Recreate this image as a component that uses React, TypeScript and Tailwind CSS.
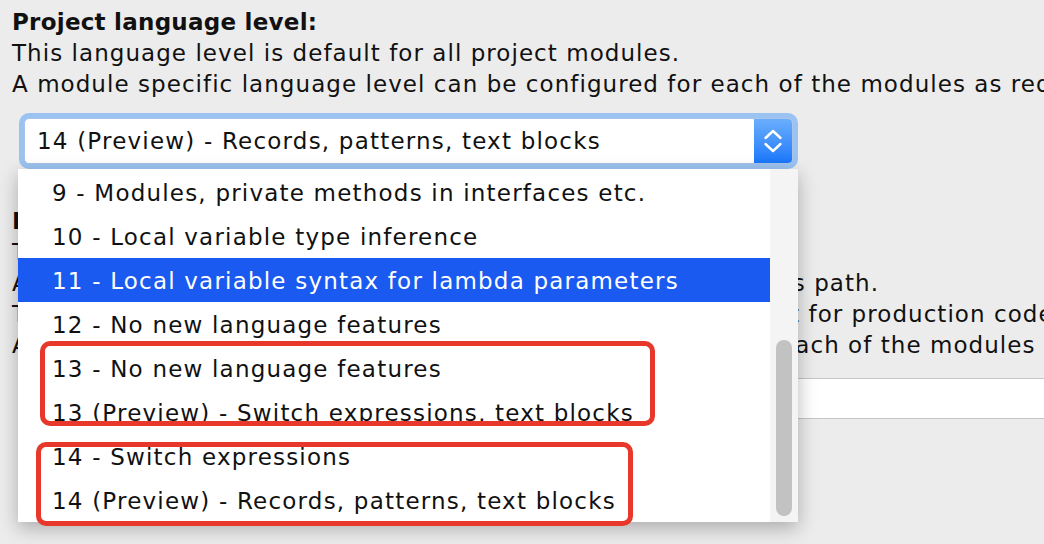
import { ReactNode } from "react";

const levels = [
  "9 - Modules, private methods in interfaces etc.",
  "10 - Local variable type inference",
  "11 - Local variable syntax for lambda parameters",
  "12 - No new language features",
  "13 - No new language features",
  "13 (Preview) - Switch expressions, text blocks",
  "14 - Switch expressions",
  "14 (Preview) - Records, patterns, text blocks",
];

const selected = 2;

function Line({ children, bold }: { children: ReactNode; bold?: boolean }) {
  return (
    <div
      className={`h-[31px] leading-[31px] whitespace-nowrap ${
        bold ? "font-bold tracking-[0.25px]" : "tracking-[1.05px]"
      }`}
    >
      {children}
    </div>
  );
}

function Chevrons() {
  return (
    <svg width="20" height="26" viewBox="0 0 20 26" fill="none">
      <path d="M2.5 10 L10 3 L17.5 10" stroke="white" strokeWidth="2.4" strokeLinecap="round" strokeLinejoin="round" />
      <path d="M2.5 16 L10 23 L17.5 16" stroke="white" strokeWidth="2.4" strokeLinecap="round" strokeLinejoin="round" />
    </svg>
  );
}

export default function App() {
  return (
    <div className="relative h-[544px] w-[1044px] overflow-hidden bg-[#ececec] font-['DejaVu_Sans',sans-serif] text-[23px] text-[#111]">
      <div className="flex flex-col pl-[12px] pt-[7px]">
        <Line bold>Project language level:</Line>
        <Line>This language level is default for all project modules.</Line>
        <Line>A module specific language level can be configured for each of the modules as required.</Line>

        {/* combo box with focus ring */}
        <div className="ml-[7px] mt-[13px] w-[779px] rounded-[10px] bg-[#9bc3f2] p-[5px]">
          <div className="flex h-[46px] overflow-hidden rounded-[5px] border border-[#a9c4e6] bg-white">
            <div className="flex-1 pl-[12px] leading-[44px] tracking-[1.2px] whitespace-nowrap">
              14 (Preview) - Records, patterns, text blocks
            </div>
            <div className="flex w-[38px] items-center justify-center bg-gradient-to-b from-[#6aaefc] to-[#1877fb]">
              <Chevrons />
            </div>
          </div>
        </div>

        <div className="mt-[37px]">
          <Line bold>Project compiler output:</Line>
          <Line>This path is used to store all project compilation results.</Line>
          <Line>A directory corresponding to each module is created under this path.</Line>
          <Line>This directory contains two subdirectories: Production and Test for production code and test sources, respectively.</Line>
          <Line>A module specific compile output path can be configured for each of the modules as required.</Line>
        </div>

        <div className="mt-[17px] ml-[6px] h-[41px] w-[1100px] border-y border-[#c6c6c6] bg-white" />
      </div>

      {/* open dropdown list */}
      <div className="absolute left-[18px] top-[169px] flex h-[353px] w-[780px] bg-white shadow-[0_6px_18px_rgba(0,0,0,0.28)]">
        <div className="flex-1 pt-[1px]">
          {levels.map((text, i) => (
            <div
              key={text}
              className={`h-[44px] pl-[34px] leading-[46px] tracking-[1.2px] whitespace-nowrap ${
                i === selected ? "bg-[#1a5af0] text-white" : ""
              }`}
            >
              {text}
            </div>
          ))}
        </div>
        <div className="flex w-[28px] flex-col bg-[#f4f4f4] px-[6px] pt-[171px] pb-[6px]">
          <div className="flex-1 rounded-full bg-[#c2c2c2]" />
        </div>
      </div>

      {/* annotation boxes */}
      <div className="absolute left-[40px] top-[341px] h-[85px] w-[615px] rounded-[10px] border-[5px] border-[#e8382b]" />
      <div className="absolute left-[36px] top-[442px] h-[84px] w-[597px] rounded-[10px] border-[5px] border-[#e8382b]" />
    </div>
  );
}
